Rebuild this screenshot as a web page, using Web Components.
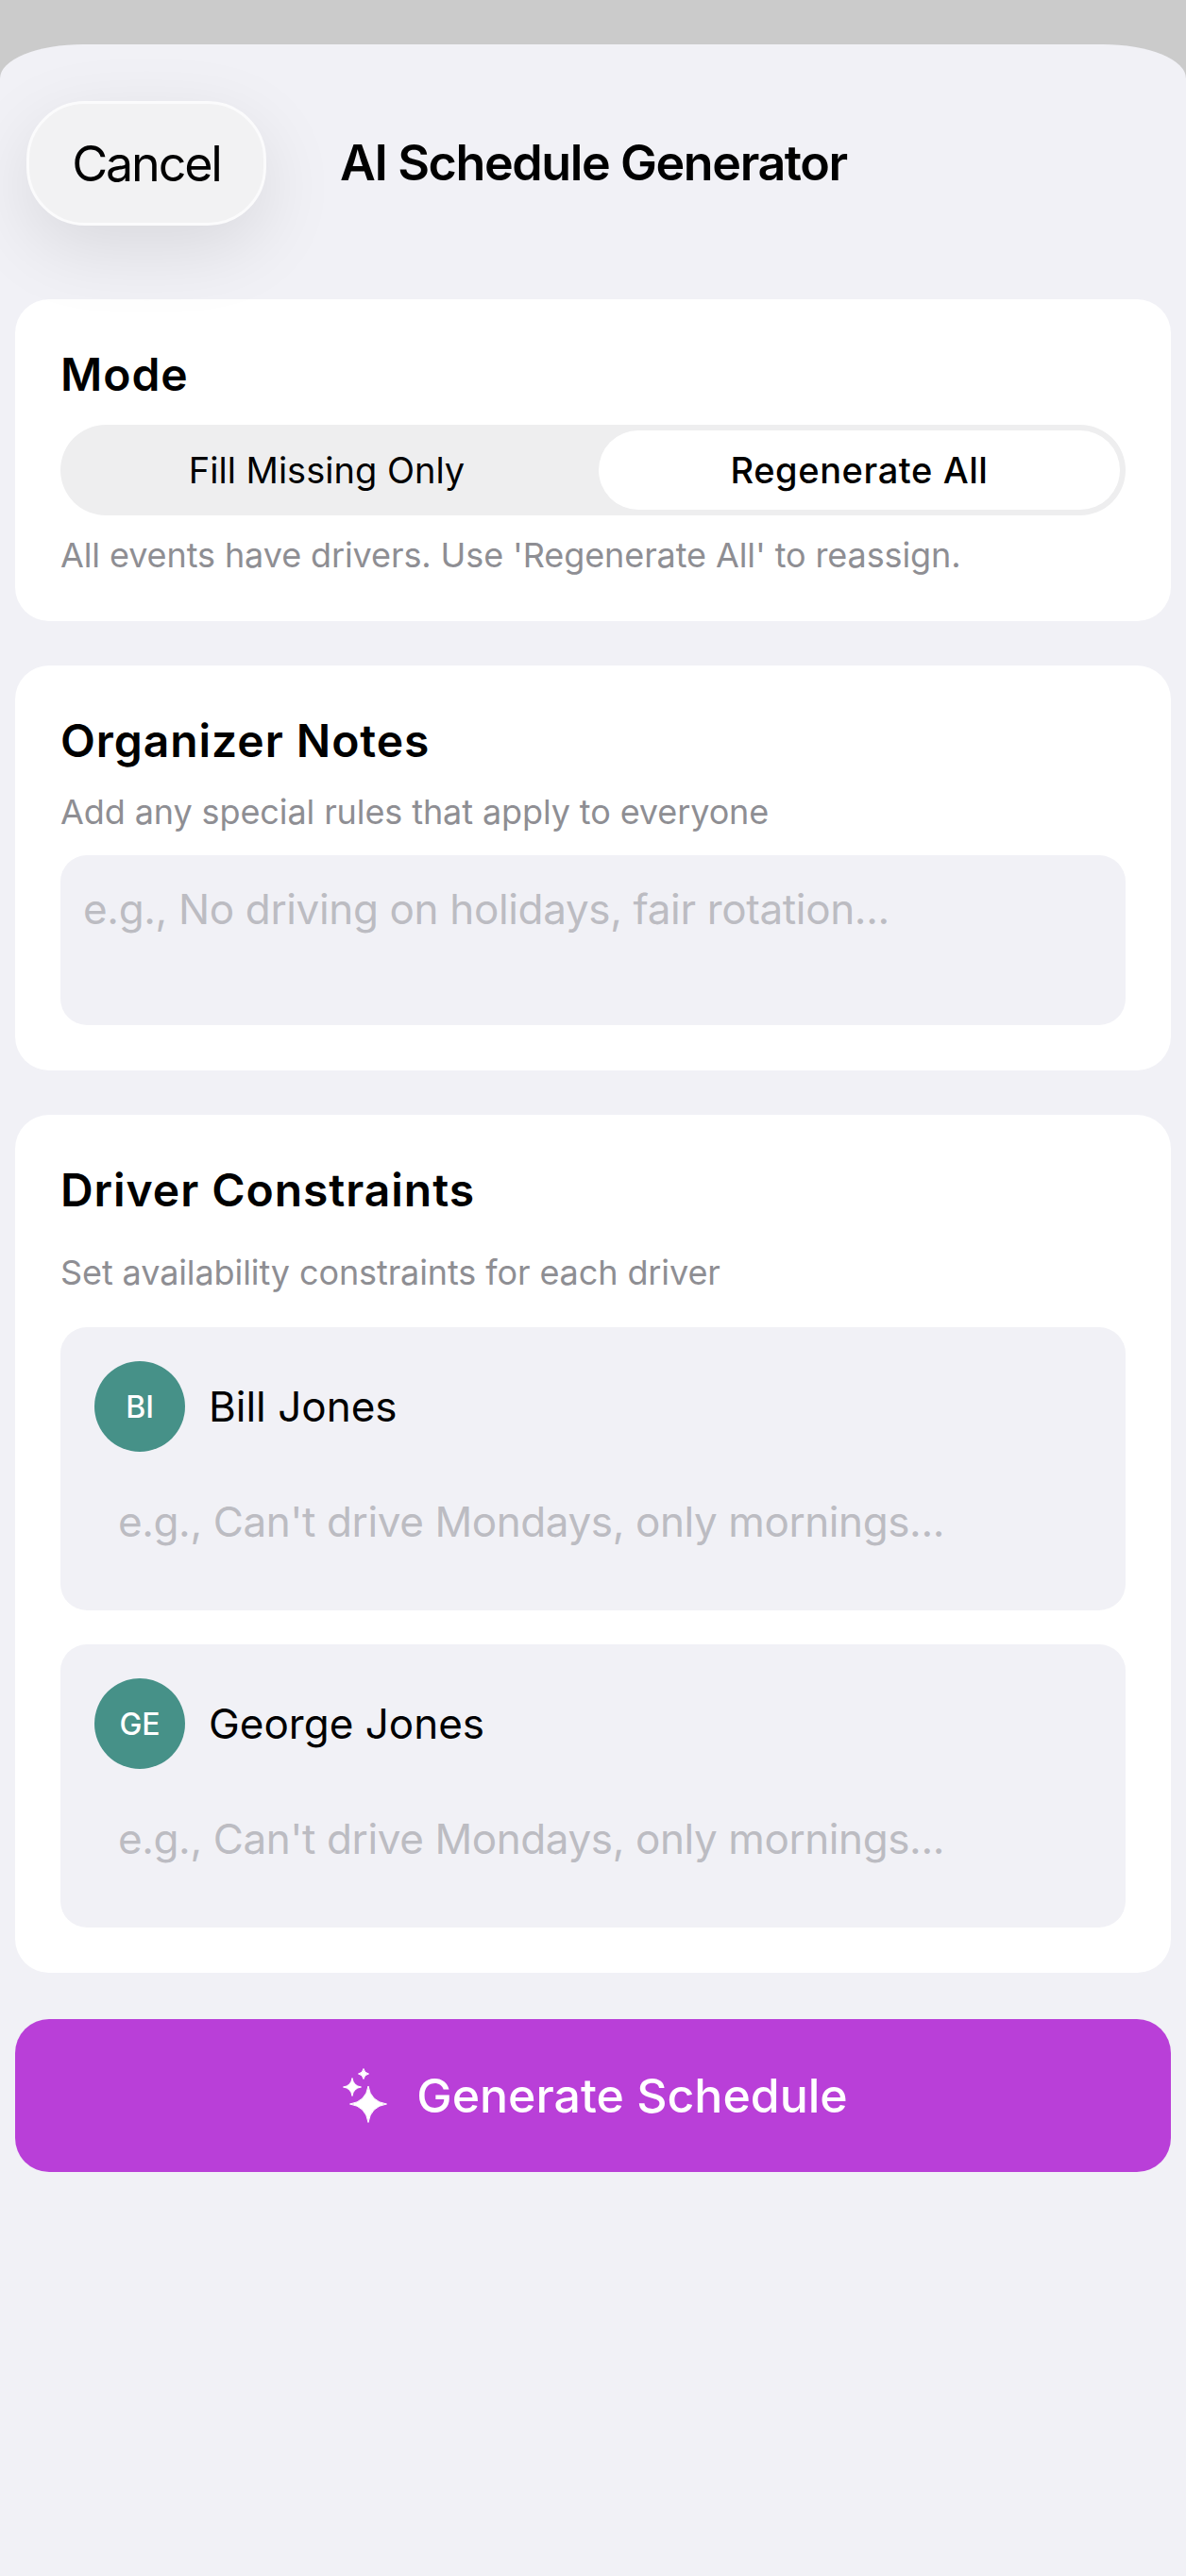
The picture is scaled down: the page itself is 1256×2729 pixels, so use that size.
<!DOCTYPE html>
<html>
<head>
<meta charset="utf-8">
<title>AI Schedule Generator</title>
<style>
    html, body { margin: 0; padding: 0; background: #cbcbcb; }
    body { font-family: Inter, "Liberation Sans", sans-serif; color: #000; }
</style>
</head>
<body>
<schedule-sheet>
    <sheet-header slot="header" title-text="AI Schedule Generator" cancel-text="Cancel"></sheet-header>
    <section-card pad-top="50">
        <card-heading>Mode</card-heading>
        <mode-switch style="margin-top:23px"></mode-switch>
        <card-hint style="margin-top:20px">All events have drivers. Use 'Regenerate All' to reassign.</card-hint>
    </section-card>
    <section-card pad-top="50">
        <card-heading>Organizer Notes</card-heading>
        <card-hint style="margin-top:23px">Add any special rules that apply to everyone</card-hint>
        <notes-field style="margin-top:24px">e.g., No driving on holidays, fair rotation...</notes-field>
    </section-card>
    <section-card pad-top="50">
        <card-heading>Driver Constraints</card-heading>
        <card-hint style="margin-top:35px">Set availability constraints for each driver</card-hint>
        <driver-row style="margin-top:36px" initials="BI" name="Bill Jones"></driver-row>
        <driver-row style="margin-top:36px" initials="GE" name="George Jones"></driver-row>
    </section-card>
    <generate-button>Generate Schedule</generate-button>
</schedule-sheet>

<script>
const sheetTemplate = document.createElement('template');
sheetTemplate.innerHTML = `
    <style>
        :host {
            display: block;
            margin-top: 47px;
            min-height: 2682px;
            box-sizing: border-box;
            background: #f1f1f6;
            border-radius: 88px 88px 0 0 / 36px 36px 0 0;
        }
        .body {
            display: flex;
            flex-direction: column;
            gap: 47px;
            padding: 0 16px;
        }
    </style>
    <slot name="header"></slot>
    <div class="body"><slot></slot></div>`;

class ScheduleSheet extends HTMLElement {
    constructor() {
        super();
        this.attachShadow({ mode: 'open' }).appendChild(sheetTemplate.content.cloneNode(true));
    }
}
customElements.define('schedule-sheet', ScheduleSheet);

const headerTemplate = document.createElement('template');
headerTemplate.innerHTML = `
    <style>
        :host {
            display: block;
            position: relative;
            z-index: 2;
            height: 270px;
            box-sizing: border-box;
            padding: 60px 0 0 28px;
        }
        .row {
            display: flex;
            align-items: center;
        }
        button {
            width: 254px;
            height: 132px;
            box-sizing: border-box;
            padding: 0;
            border: 3px solid #fbfbfc;
            border-radius: 62px;
            background: #f2f2f3;
            box-shadow: 0 24px 80px rgb(0 0 0 / 0.1);
            font: 400 52px Inter, "Liberation Sans", sans-serif;
            letter-spacing: -2.2px;
            color: #000;
        }
        h1 {
            margin: 0 0 0 78px;
            font-size: 52px;
            line-height: 60px;
            font-weight: 600;
            letter-spacing: -1.4px;
        }
    </style>
    <div class="row">
        <button></button>
        <h1></h1>
    </div>`;

class SheetHeader extends HTMLElement {
    constructor() {
        super();
        this.attachShadow({ mode: 'open' }).appendChild(headerTemplate.content.cloneNode(true));
    }

    connectedCallback() {
        this.shadowRoot.querySelector('button').textContent = this.getAttribute('cancel-text');
        this.shadowRoot.querySelector('h1').textContent = this.getAttribute('title-text');
    }
}
customElements.define('sheet-header', SheetHeader);

const cardTemplate = document.createElement('template');
cardTemplate.innerHTML = `
    <style>
        :host {
            display: block;
            box-sizing: border-box;
            padding: var(--pad-top, 50px) 48px 48px;
            background: #fff;
            border-radius: 36px;
        }
    </style>
    <slot></slot>`;

class SectionCard extends HTMLElement {
    constructor() {
        super();
        this.attachShadow({ mode: 'open' }).appendChild(cardTemplate.content.cloneNode(true));
    }

    connectedCallback() {
        this.style.setProperty('--pad-top', this.getAttribute('pad-top') + 'px');
    }
}
customElements.define('section-card', SectionCard);

const headingTemplate = document.createElement('template');
headingTemplate.innerHTML = `
    <style>
        :host {
            display: block;
            font-size: 48px;
            line-height: 60px;
            font-weight: 570;
            letter-spacing: 0.95px;
            color: #000;
        }
    </style>
    <slot></slot>`;

class CardHeading extends HTMLElement {
    constructor() {
        super();
        this.attachShadow({ mode: 'open' }).appendChild(headingTemplate.content.cloneNode(true));
    }
}
customElements.define('card-heading', CardHeading);

const hintTemplate = document.createElement('template');
hintTemplate.innerHTML = `
    <style>
        :host {
            display: block;
            font-size: 36px;
            line-height: 44px;
            letter-spacing: -0.1px;
            color: #8e8e93;
        }
    </style>
    <slot></slot>`;

class CardHint extends HTMLElement {
    constructor() {
        super();
        this.attachShadow({ mode: 'open' }).appendChild(hintTemplate.content.cloneNode(true));
    }
}
customElements.define('card-hint', CardHint);

const switchTemplate = document.createElement('template');
switchTemplate.innerHTML = `
    <style>
        :host {
            display: grid;
            grid-template-columns: 564fr 552fr;
            height: 96px;
            box-sizing: border-box;
            padding: 6px;
            background: #eeeeef;
            border-radius: 48px;
        }
        div {
            display: flex;
            align-items: center;
            justify-content: center;
            border-radius: 42px;
            font-size: 38px;
            font-weight: 400;
        }
        .off {
            padding-right: 12px;
        }
        .on {
            background: #fff;
            font-weight: 500;
            letter-spacing: 0.6px;
        }
    </style>
    <div class="off">Fill Missing Only</div>
    <div class="on">Regenerate All</div>`;

class ModeSwitch extends HTMLElement {
    constructor() {
        super();
        this.attachShadow({ mode: 'open' }).appendChild(switchTemplate.content.cloneNode(true));
    }
}
customElements.define('mode-switch', ModeSwitch);

const notesTemplate = document.createElement('template');
notesTemplate.innerHTML = `
    <style>
        :host {
            display: block;
            height: 180px;
            box-sizing: border-box;
            padding: 30px 24px;
            background: #f1f1f6;
            border-radius: 28px;
            font-size: 44px;
            line-height: 54px;
            letter-spacing: -0.35px;
            color: #bcbcc2;
        }
    </style>
    <slot></slot>`;

class NotesField extends HTMLElement {
    constructor() {
        super();
        this.attachShadow({ mode: 'open' }).appendChild(notesTemplate.content.cloneNode(true));
    }
}
customElements.define('notes-field', NotesField);

const driverTemplate = document.createElement('template');
driverTemplate.innerHTML = `
    <style>
        :host {
            display: block;
            height: 300px;
            box-sizing: border-box;
            padding: 36px;
            background: #f1f1f6;
            border-radius: 28px;
        }
        .who {
            display: flex;
            align-items: center;
            gap: 25px;
        }
        .avatar {
            display: flex;
            align-items: center;
            justify-content: center;
            width: 96px;
            height: 96px;
            border-radius: 50%;
            background: #469188;
            color: #fff;
            font-size: 32px;
            font-weight: 550;
        }
        .name {
            font-size: 44px;
            font-weight: 400;
            color: #000;
        }
        .input {
            margin: 47px 0 0 25px;
            font-size: 44px;
            line-height: 54px;
            letter-spacing: -0.4px;
            color: #bcbcc2;
        }
    </style>
    <div class="who">
        <div class="avatar"></div>
        <div class="name"></div>
    </div>
    <div class="input">e.g., Can't drive Mondays, only mornings...</div>`;

class DriverRow extends HTMLElement {
    constructor() {
        super();
        this.attachShadow({ mode: 'open' }).appendChild(driverTemplate.content.cloneNode(true));
    }

    connectedCallback() {
        this.shadowRoot.querySelector('.avatar').textContent = this.getAttribute('initials');
        this.shadowRoot.querySelector('.name').textContent = this.getAttribute('name');
    }
}
customElements.define('driver-row', DriverRow);

const generateTemplate = document.createElement('template');
generateTemplate.innerHTML = `
    <style>
        :host {
            display: flex;
            align-items: center;
            justify-content: center;
            gap: 30px;
            height: 162px;
            box-sizing: border-box;
            padding-left: 5px;
            margin-top: 2px;
            background: #b93fd8;
            border-radius: 36px;
            color: #fff;
            font-size: 50px;
            font-weight: 530;
        }
        svg { display: block; }
    </style>
    <svg width="48" height="58" viewBox="0 0 48 58" fill="#fff" stroke="#fff" stroke-width="1" stroke-linejoin="round">
        <path d="M27 19 Q29.5 35.5 46.5 38 Q29.5 40.5 27 57.5 Q24.5 40.5 7.5 38 Q24.5 35.5 27 19Z"/>
        <path d="M10 10.5 Q11.2 18.8 19.5 20 Q11.2 21.2 10 29.5 Q8.8 21.2 0.5 20 Q8.8 18.8 10 10.5Z"/>
        <path d="M22 0.5 Q22.8 5.2 27.5 6 Q22.8 6.8 22 11.5 Q21.2 6.8 16.5 6 Q21.2 5.2 22 0.5Z"/>
    </svg>
    <slot></slot>`;

class GenerateButton extends HTMLElement {
    constructor() {
        super();
        this.attachShadow({ mode: 'open' }).appendChild(generateTemplate.content.cloneNode(true));
    }
}
customElements.define('generate-button', GenerateButton);
</script>
</body>
</html>
